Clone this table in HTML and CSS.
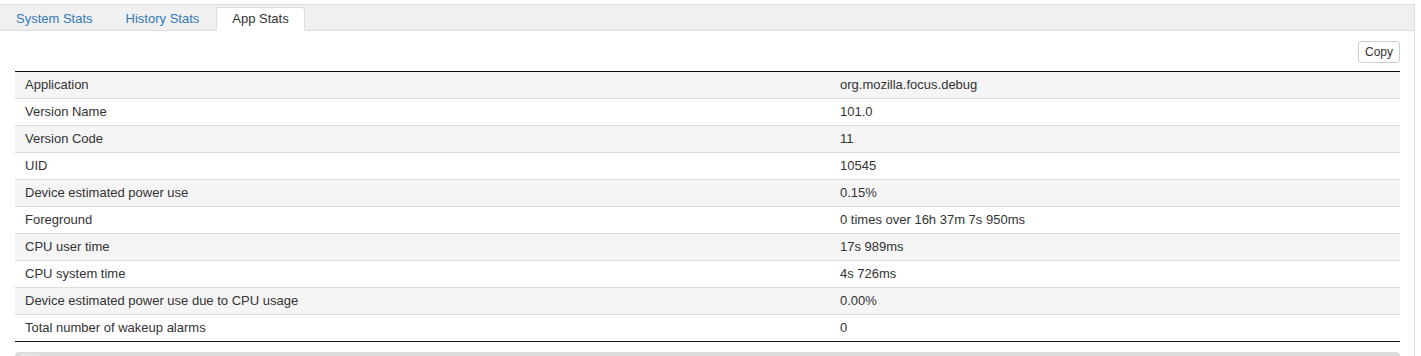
FILE: index.html
```html
<!DOCTYPE html>
<html>
<head>
<meta charset="utf-8">
<link rel="stylesheet" href="styles.css">
</head>
<body>
<div class="panel">
  <div class="tabs">
    <a class="tab">System Stats</a>
    <a class="tab">History Stats</a>
    <a class="tab active">App Stats</a>
  </div>
  <div class="content">
    <div class="toolbar"><button class="btn">Copy</button></div>
    <table class="stats">
      <colgroup><col class="c1"><col></colgroup>
      <tbody>
        <tr><td>Application</td><td>org.mozilla.focus.debug</td></tr>
        <tr><td>Version Name</td><td>101.0</td></tr>
        <tr><td>Version Code</td><td>11</td></tr>
        <tr><td>UID</td><td>10545</td></tr>
        <tr><td>Device estimated power use</td><td>0.15%</td></tr>
        <tr><td>Foreground</td><td>0 times over 16h 37m 7s 950ms</td></tr>
        <tr><td>CPU user time</td><td>17s 989ms</td></tr>
        <tr><td>CPU system time</td><td>4s 726ms</td></tr>
        <tr><td>Device estimated power use due to CPU usage</td><td>0.00%</td></tr>
        <tr><td>Total number of wakeup alarms</td><td>0</td></tr>
      </tbody>
    </table>
    <div class="next"><span class="next-inner"></span></div>
  </div>
</div>
</body>
</html>
```

FILE: styles.css
```css
html, body {
  margin: 0;
  padding: 0;
  background: #fff;
  font-family: "Liberation Sans", Arial, Helvetica, sans-serif;
  font-size: 13px;
  color: #333;
  overflow: hidden;
}

.panel {
  margin: 4px 6px 0 -1px;
  border: 1px solid #ddd;
  border-bottom: none;
}

.tabs {
  display: flex;
  background: #f0f0f0;
  padding: 2px 0 0 0;
  border-bottom: 1px solid #ddd;
}

.tab {
  display: block;
  padding: 0 15px;
  margin-right: 1px;
  line-height: 22px;
  border: 1px solid transparent;
  border-radius: 3px 3px 0 0;
  margin-bottom: -1px;
  color: #337ab7;
  cursor: pointer;
}

.tab.active {
  background: #fff;
  color: #333;
  border-color: #ddd;
  border-bottom-color: #fff;
}

.content {
  padding: 10px 14px 0 15px;
}

.toolbar {
  display: flex;
  justify-content: flex-end;
  margin-bottom: 8px;
}

.btn {
  font-family: "Liberation Sans", Arial, Helvetica, sans-serif;
  font-size: 12px;
  line-height: 18px;
  padding: 1px 6px;
  border: 1px solid #ccc;
  border-radius: 3px;
  background: #fff;
  color: #333;
  margin: 0;
}

.stats {
  width: 100%;
  border-collapse: collapse;
  table-layout: fixed;
  border-top: 1px solid #111;
  border-bottom: 1px solid #111;
}

.stats col.c1 {
  width: 815px;
}

.stats td {
  padding: 4px 8px 4px 10px;
  line-height: 18px;
  border-top: 1px solid #ddd;
  white-space: nowrap;
}

.stats tr:first-child td {
  border-top: none;
}

.stats tr:nth-child(odd) td {
  background: #f5f5f5;
}

.next {
  margin-top: 10px;
  height: 20px;
  background: #dcdcdc;
  border-radius: 4px;
  padding: 2px 5px;
}

.next-inner {
  display: block;
  width: 20px;
  height: 16px;
  background: #e6e6e6;
  border-radius: 3px;
}
```
